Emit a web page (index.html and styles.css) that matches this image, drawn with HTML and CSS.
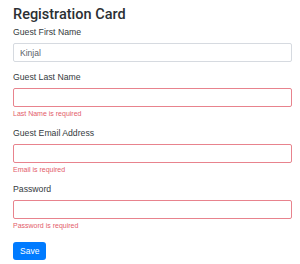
FILE: index.html
```html
<!DOCTYPE html>
<html lang="en">
<head>
    <meta charset="UTF-8">
    <meta name="viewport" content="width=device-width, initial-scale=1.0">
    <title>Registration Card</title>
    <link rel="stylesheet" href="styles.css">
</head>
<body>
    <div class="card">
        <h1>Registration Card</h1>

        <div class="form-group">
            <label for="first-name">Guest First Name</label>
            <input type="text" id="first-name" class="form-control" value="Kinjal">
        </div>

        <div class="form-group">
            <label for="last-name">Guest Last Name</label>
            <input type="text" id="last-name" class="form-control is-invalid">
            <div class="invalid-feedback">Last Name is required</div>
        </div>

        <div class="form-group">
            <label for="email">Guest Email Address</label>
            <input type="email" id="email" class="form-control is-invalid">
            <div class="invalid-feedback">Email is required</div>
        </div>

        <div class="form-group">
            <label for="password">Password</label>
            <input type="password" id="password" class="form-control is-invalid">
            <div class="invalid-feedback">Password is required</div>
        </div>

        <button class="btn-save">Save</button>
    </div>
</body>
</html>
```

FILE: styles.css
```css
body {
    margin: 0;
    font-family: "Liberation Sans", Arial, sans-serif;
    color: #212529;
    background-color: #fff;
}

.card {
    padding: 5px 8px 0 13px;
}

h1 {
    margin: 0 0 2px 0;
    font-family: Roboto, "Liberation Sans", sans-serif;
    font-size: 14.5px;
    font-weight: 500;
    line-height: 20px;
    color: #2b2f33;
}

.form-group {
    margin-bottom: 10px;
}

label {
    display: block;
    font-size: 8.7px;
    line-height: 11px;
    margin-bottom: 5px;
    color: #343a40;
}

.form-control {
    display: block;
    box-sizing: border-box;
    width: 100%;
    height: 19px;
    margin: 0;
    padding: 0 6px;
    font-family: "Liberation Sans", Arial, sans-serif;
    font-size: 8.5px;
    color: #5a6168;
    border: 1px solid #d6dae0;
    border-radius: 2px;
    outline: none;
}

.form-control.is-invalid {
    border-color: #e8838d;
}

.invalid-feedback {
    margin-top: 2px;
    font-size: 7px;
    line-height: 9px;
    color: #e35d6a;
}

.btn-save {
    height: 18px;
    padding: 0 7px;
    font-family: "Liberation Sans", Arial, sans-serif;
    font-size: 8.5px;
    color: #fff;
    background-color: #007bff;
    border: none;
    border-radius: 3px;
    cursor: pointer;
}
```
